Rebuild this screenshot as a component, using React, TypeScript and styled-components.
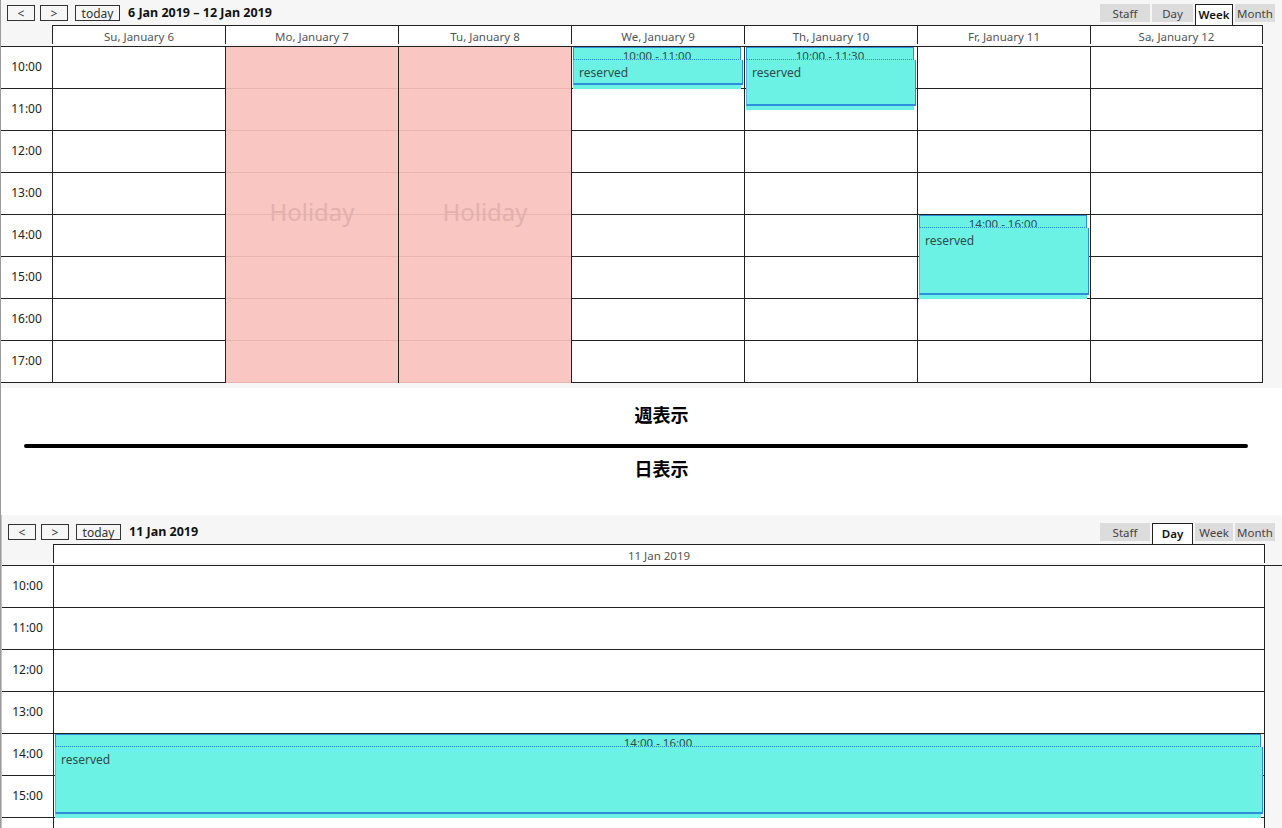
import React from 'react';
import styled, { createGlobalStyle } from 'styled-components';

const GlobalStyle = createGlobalStyle`
  html, body { margin: 0; padding: 0; background: #fff; }
  body { font-family: "Noto Sans", "Open Sans", sans-serif; color: #333; }
  * { box-sizing: border-box; }
`;

const SLOT = 42;
const LINE = '#222';
const TEAL = '#6cf2e5';
const BLUE = '#2f8ddb';

const Page = styled.div`
  width: 1282px;
  height: 828px;
  overflow: hidden;
  border-left: 1px solid #9b9b9b;
`;

const CalendarBox = styled.section<{ $padTop: number; $inset: number }>`
  background: #f6f6f6;
  padding-top: ${({ $padTop }) => $padTop}px;
  padding-bottom: 5px;
  border-left: ${({ $inset }) => $inset}px solid #c4c4c4;
`;

const Toolbar = styled.div`
  height: 25px;
  display: flex;
  align-items: flex-start;
  padding: 4px 7px 0 6px;
`;

const NavButton = styled.button<{ $w: number; $gap: number }>`
  width: ${({ $w }) => $w}px;
  height: 16px;
  margin: 1px 0 0 ${({ $gap }) => $gap}px;
  padding: 0;
  border: 1px solid #333;
  background: transparent;
  font-family: inherit;
  font-size: 12px;
  line-height: 13px;
  color: #333;
`;

const Title = styled.div`
  margin: 1px 0 0 8px;
  font-size: 12.5px;
  font-weight: 700;
  line-height: 16px;
  color: #111;
`;

const ViewSwitch = styled.div`
  margin-left: auto;
  display: flex;
  gap: 2px;
`;

const ViewButton = styled.div<{ $w: number; $active: boolean }>`
  width: ${({ $w }) => $w}px;
  height: ${({ $active }) => ($active ? 21 : 18)}px;
  padding-top: 2px;
  text-align: center;
  font-size: 11.5px;
  line-height: 15px;
  color: ${({ $active }) => ($active ? '#111' : '#444')};
  font-weight: ${({ $active }) => ($active ? 600 : 400)};
  background: ${({ $active }) => ($active ? '#fff' : '#dcdcdc')};
  border: ${({ $active }) => ($active ? `1px solid ${LINE}` : 'none')};
  border-bottom: none;
`;

const HeaderRow = styled.div`
  display: flex;
  height: 21px;
  align-items: flex-start;
`;

const Gutter = styled.div<{ $w: number }>`
  width: ${({ $w }) => $w}px;
  flex: none;
`;

const DayHead = styled.div<{ $w: number; $last: boolean }>`
  width: ${({ $w }) => $w}px;
  height: 19px;
  flex: none;
  background: #fff;
  border-top: 1px solid ${LINE};
  border-left: 1px solid ${LINE};
  border-right: ${({ $last }) => ($last ? `1px solid ${LINE}` : 'none')};
  padding-top: 4px;
  text-align: center;
  font-size: 11.5px;
  line-height: 14px;
  color: #555;
`;

const Body = styled.div<{ $full: boolean }>`
  display: flex;
  width: ${({ $full }) => ($full ? '100%' : 'max-content')};
  border-top: 1px solid ${LINE};
`;

const TimeCol = styled.div<{ $w: number }>`
  width: ${({ $w }) => $w}px;
  flex: none;
  background: #fff;
`;

const TimeSlot = styled.div`
  height: ${SLOT}px;
  border-bottom: 1px solid ${LINE};
  padding-bottom: 3px;
  display: flex;
  align-items: center;
  justify-content: center;
  font-size: 12px;
  color: #222;
`;

const DayCol = styled.div<{ $w: number; $last: boolean; $holiday: boolean }>`
  position: relative;
  width: ${({ $w }) => $w}px;
  flex: none;
  background: ${({ $holiday }) => ($holiday ? '#f9c6c2' : '#fff')};
  border-left: 1px solid ${LINE};
  border-right: ${({ $last }) => ($last ? `1px solid ${LINE}` : 'none')};
`;

const Slot = styled.div<{ $holiday: boolean }>`
  height: ${SLOT}px;
  border-bottom: 1px solid ${({ $holiday }) => ($holiday ? '#ebb4af' : LINE)};
`;

const HolidayLabel = styled.div`
  position: absolute;
  left: 0;
  right: 0;
  top: 50%;
  transform: translateY(-62%);
  text-align: center;
  font-size: 24px;
  color: #e4b0ac;
`;

const Event = styled.div`
  position: absolute;
  left: 1px;
  right: 3px;
  display: flex;
  flex-direction: column;
  color: #2e4d4a;
  font-size: 12px;
`;

const EventHead = styled.div`
  height: 13px;
  flex: none;
  overflow: hidden;
  background: ${TEAL};
  border: 1px solid ${BLUE};
  border-bottom: 1px dotted ${BLUE};
  padding-top: 1px;
  text-align: center;
  font-size: 11.5px;
  line-height: 13px;
`;

const EventBody = styled.div`
  flex: 1;
  margin-right: -2px;
  background: ${TEAL};
  border-left: 1px solid #5fb5e8;
  border-right: 1px solid ${BLUE};
  border-bottom: 2px solid ${BLUE};
  padding: 6px 5px 0;
  line-height: 14px;
`;

const EventTail = styled.div`
  height: 4px;
  flex: none;
  background: ${TEAL};
`;

const Divider = styled.div`
  padding: 15px 0 36px;
  background: #fff;
`;

const Heading = styled.h3`
  margin: 0 0 0 40px;
  text-align: center;
  font-family: "Noto Sans CJK JP", sans-serif;
  font-size: 18px;
  font-weight: 700;
  line-height: 22px;
  color: #000;
`;

const Rule = styled.div`
  height: 4px;
  margin: 19px 34px 9px 23px;
  background: #000;
  border-radius: 2px;
`;

type CalEvent = { day: number; start: number; end: number };
type Day = { label: string; holiday?: boolean };

const fmt = (h: number) => `${Math.floor(h)}:${h % 1 ? '30' : '00'}`;

const views = [
  { name: 'Staff', w: 50 },
  { name: 'Day', w: 41 },
  { name: 'Week', w: 38 },
  { name: 'Month', w: 40 },
];

interface CalendarProps {
  title: string;
  view: string;
  days: Day[];
  colWidth: number;
  timeWidth: number;
  hours: number[];
  events: CalEvent[];
  padTop: number;
  inset: number;
  fullRule?: boolean;
}

const Calendar = ({ title, view, days, colWidth, timeWidth, hours, events, padTop, inset, fullRule = false }: CalendarProps) => (
  <CalendarBox $padTop={padTop} $inset={inset}>
    <Toolbar>
      <NavButton $w={28} $gap={0}>&lt;</NavButton>
      <NavButton $w={28} $gap={5}>&gt;</NavButton>
      <NavButton $w={45} $gap={7}>today</NavButton>
      <Title>{title}</Title>
      <ViewSwitch>
        {views.map(v => (
          <ViewButton key={v.name} $w={v.w} $active={v.name === view}>{v.name}</ViewButton>
        ))}
      </ViewSwitch>
    </Toolbar>
    <HeaderRow>
      <Gutter $w={timeWidth} />
      {days.map((d, i) => (
        <DayHead key={d.label} $w={colWidth} $last={i === days.length - 1}>{d.label}</DayHead>
      ))}
    </HeaderRow>
    <Body $full={fullRule}>
      <TimeCol $w={timeWidth}>
        {hours.map(h => <TimeSlot key={h}>{h}:00</TimeSlot>)}
      </TimeCol>
      {days.map((d, i) => (
        <DayCol key={d.label} $w={colWidth} $last={i === days.length - 1} $holiday={!!d.holiday}>
          {hours.map(h => <Slot key={h} $holiday={!!d.holiday} />)}
          {d.holiday && <HolidayLabel>Holiday</HolidayLabel>}
          {events.filter(e => e.day === i).map(e => (
            <Event
              key={e.start}
              style={{ top: (e.start - hours[0]) * SLOT, height: (e.end - e.start) * SLOT }}
            >
              <EventHead>{fmt(e.start)} - {fmt(e.end)}</EventHead>
              <EventBody>reserved</EventBody>
              <EventTail />
            </Event>
          ))}
        </DayCol>
      ))}
    </Body>
  </CalendarBox>
);

const weekDays: Day[] = [
  { label: 'Su, January 6' },
  { label: 'Mo, January 7', holiday: true },
  { label: 'Tu, January 8', holiday: true },
  { label: 'We, January 9' },
  { label: 'Th, January 10' },
  { label: 'Fr, January 11' },
  { label: 'Sa, January 12' },
];

const weekEvents: CalEvent[] = [
  { day: 3, start: 10, end: 11 },
  { day: 4, start: 10, end: 11.5 },
  { day: 5, start: 14, end: 16 },
];

export default function App() {
  return (
    <>
      <GlobalStyle />
      <Page>
        <Calendar
          title="6 Jan 2019 – 12 Jan 2019"
          view="Week"
          days={weekDays}
          colWidth={173}
          timeWidth={51}
          hours={[10, 11, 12, 13, 14, 15, 16, 17]}
          events={weekEvents}
          padTop={0}
          inset={0}
        />
        <Divider>
          <Heading>週表示</Heading>
          <Rule />
          <Heading>日表示</Heading>
        </Divider>
        <Calendar
          title="11 Jan 2019"
          view="Day"
          days={[{ label: '11 Jan 2019' }]}
          colWidth={1212}
          timeWidth={51}
          hours={[10, 11, 12, 13, 14, 15, 16, 17]}
          events={[{ day: 0, start: 14, end: 16 }]}
          padTop={4}
          inset={1}
          fullRule
        />
      </Page>
    </>
  );
}
